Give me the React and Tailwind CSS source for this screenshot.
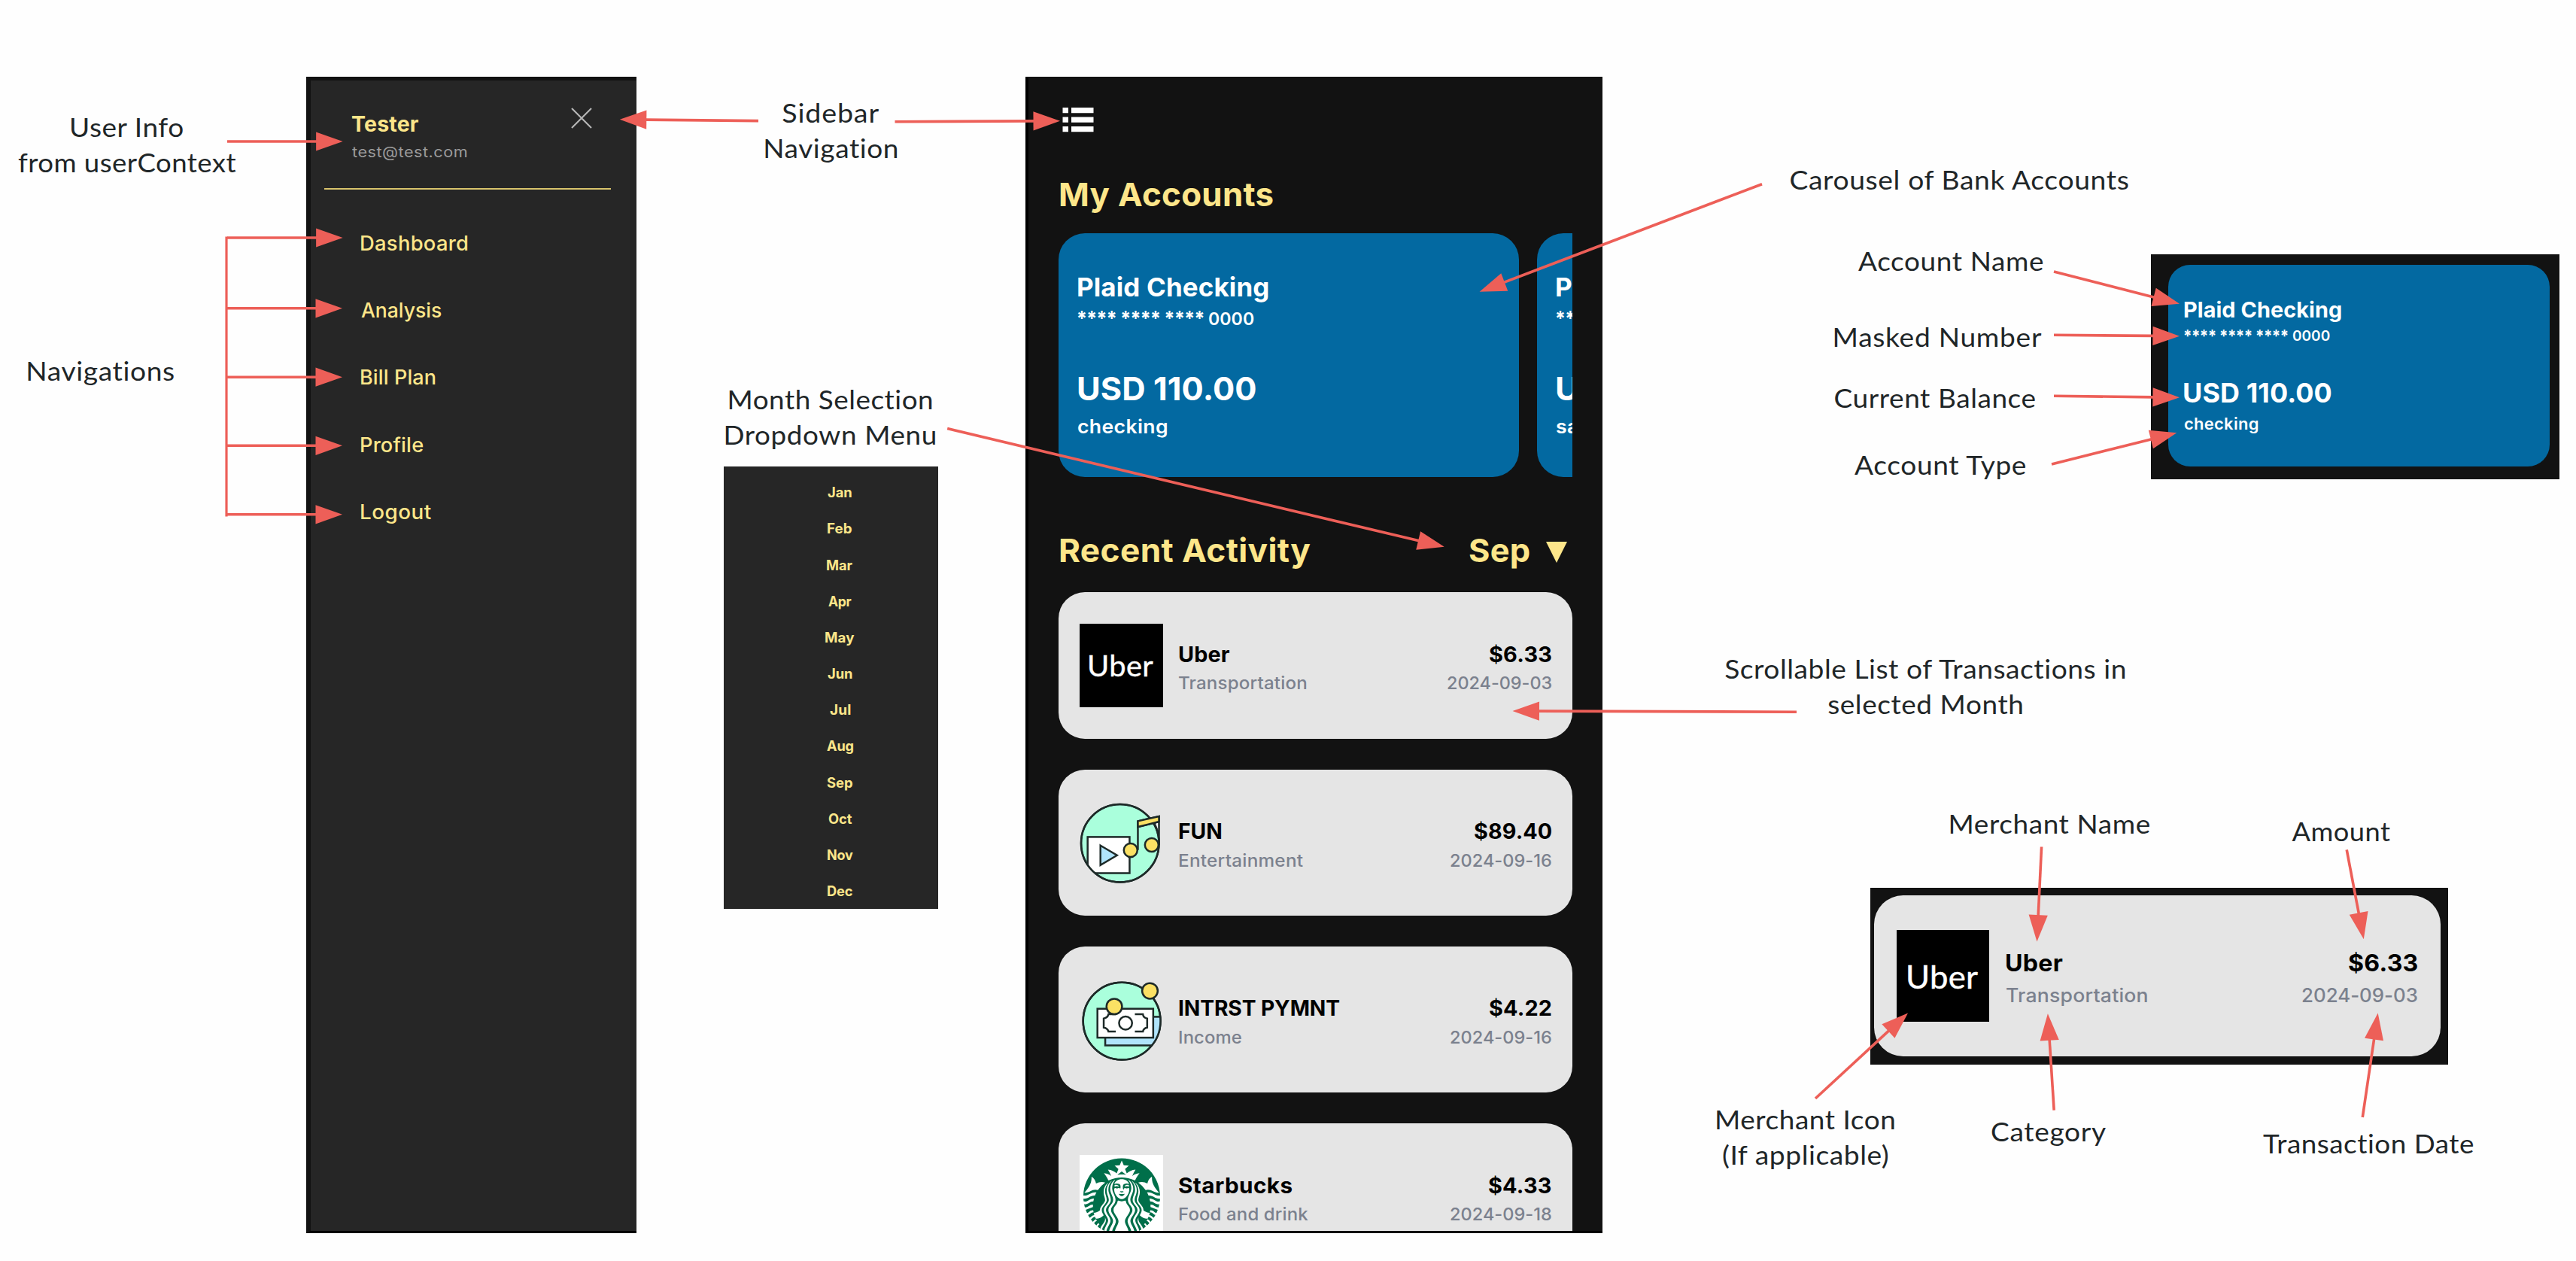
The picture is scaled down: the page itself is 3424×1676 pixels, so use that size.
import { useLayoutEffect, useRef } from "react";
import { SiStarbucks } from "react-icons/si";

/*
 * Text whose visible glyphs span exactly `w` pixels: the difference from the
 * natural width is shared between tracking and a slight horizontal stretch.
 */
function Fit({ w, className = "", children }) {
  const ref = useRef(null);
  useLayoutEffect(() => {
    const el = ref.current;
    const cs = getComputedStyle(el);
    const ctx = document.createElement("canvas").getContext("2d");
    ctx.font = `${cs.fontWeight} ${cs.fontSize} ${cs.fontFamily}`;
    const m = ctx.measureText(children);
    const left = m.actualBoundingBoxLeft;
    const ink = left + m.actualBoundingBoxRight;
    const s = Math.pow(w / ink, 0.65);
    const track = (w / s - ink) / (children.length - 1);
    const box = m.width + track * children.length;
    el.style.letterSpacing = `${track}px`;
    el.style.transform = `scaleX(${s})`;
    el.style.marginLeft = `${left * s}px`;
    el.style.marginRight = `${w - left * s - box}px`;
  }, [w, children]);
  return (
    <span ref={ref} className={`inline-block origin-left whitespace-nowrap ${className}`}>
      {children}
    </span>
  );
}

const LABELS = [
  { x: 169, y: 145, lines: [["User Info", 150], ["from userContext", 290]] },
  { x: 134, y: 468.5, lines: [["Navigations", 194]] },
  { x: 1104.8, y: 126, lines: [["Sidebar", 128], ["Navigation", 176]] },
  { x: 1104, y: 507, lines: [["Month Selection", 270], ["Dropdown Menu", 279]] },
  { x: 2603.6, y: 215, lines: [["Carousel of Bank Accounts", 451]] },
  { x: 2592.7, y: 323, lines: [["Account Name", 246]] },
  { x: 2576, y: 424, lines: [["Masked Number", 275]] },
  { x: 2572, y: 505, lines: [["Current Balance", 267]] },
  { x: 2578.6, y: 594, lines: [["Account Type", 229]] },
  { x: 2559, y: 865, lines: [["Scrollable List of Transactions in", 534], ["selected Month", 258]] },
  { x: 2725.3, y: 1071, lines: [["Merchant Name", 265]] },
  { x: 3112, y: 1080.5, lines: [["Amount", 131]] },
  { x: 2400, y: 1463.5, lines: [["Merchant Icon", 236], ["(If applicable)", 220]] },
  { x: 2723, y: 1480, lines: [["Category", 152]] },
  { x: 3148.2, y: 1496, lines: [["Transaction Date", 280.5]] },
];

function Label({ x, y, lines }) {
  return (
    <div
      className="absolute flex -translate-x-1/2 flex-col items-center font-['Lato',sans-serif] text-[35px] leading-[47px] text-[#1f2628]"
      style={{ left: x, top: y }}
    >
      {lines.map(([t, w]) => (
        <div key={t} className="h-[47px]">
          <Fit w={w}>{t}</Fit>
        </div>
      ))}
    </div>
  );
}

/* [x1, y1, tipX, tipY] */
const ARROWS = [
  [302, 188, 455.6, 188],
  [302, 316, 455.6, 316],
  [302, 409.8, 455, 409.8],
  [302, 501.2, 455, 501.2],
  [302, 592.3, 455, 592.3],
  [302, 683.8, 455, 683.8],
  [1008, 160.6, 823.8, 158.8],
  [1189.5, 161.8, 1409, 160.7],
  [1259.2, 569.6, 1919.7, 726.8],
  [2342, 244.7, 1966.6, 387.7],
  [2388, 946.2, 2010.5, 945],
  [2730, 361, 2897, 403.7],
  [2730, 445.3, 2897, 446.7],
  [2730, 526.3, 2897, 528.3],
  [2727, 617, 2893.3, 575.3],
  [2713.6, 1125.5, 2707.5, 1251.5],
  [3119.2, 1129.3, 3141.8, 1248.2],
  [2413, 1460, 2536, 1346.4],
  [2730.2, 1475.7, 2721.9, 1347.3],
  [3140.3, 1485, 3160.7, 1346.4],
];

function Arrows() {
  return (
    <svg className="pointer-events-none absolute inset-0" width="3424" height="1676" fill="#ed5f58" stroke="none">
      <line x1="301" y1="314.5" x2="301" y2="686.5" stroke="#ed5f58" strokeWidth="3.2" />
      {ARROWS.map(([x1, y1, x2, y2], i) => {
        const len = Math.hypot(x2 - x1, y2 - y1);
        const ux = (x2 - x1) / len;
        const uy = (y2 - y1) / len;
        const bx = x2 - ux * 35.5;
        const by = y2 - uy * 35.5;
        return (
          <g key={i}>
            <line x1={x1} y1={y1} x2={bx + ux} y2={by + uy} stroke="#ed5f58" strokeWidth="3.6" />
            <polygon
              points={`${x2},${y2} ${bx - uy * 12.6},${by + ux * 12.6} ${bx + uy * 12.6},${by - ux * 12.6}`}
            />
          </g>
        );
      })}
    </svg>
  );
}

const NAV = [["Dashboard", 141.5], ["Analysis", 107], ["Bill Plan", 99], ["Profile", 82.5], ["Logout", 93]];

function Sidebar() {
  return (
    <aside className="absolute left-[407px] top-[102px] h-[1537px] w-[439px] border-b-[3px] border-l-[6px] border-t-[5px] border-b-black border-l-[#121212] border-t-[#121212] bg-[#262626] pl-[18px] pr-[34px]">
      <header className="flex h-[144.5px] justify-between border-b-2 border-[#d9c36c] pl-[37px] pr-[25px]">
        <div className="flex flex-col items-start pt-[42px]">
          <div className="h-8 text-[28px] font-bold leading-8 text-[#fde68a]">
            <Fit w={88}>Tester</Fit>
          </div>
          <div className="mt-[9px] h-6 text-[20px] leading-6 text-[#9b9b9b]">
            <Fit w={152}>test@test.com</Fit>
          </div>
        </div>
        <svg className="mt-[36px]" width="28" height="28" viewBox="0 0 28 28" stroke="#b4b4b4" strokeWidth="2.2" fill="none">
          <path d="M1 1 27 27M27 1 1 27" />
        </svg>
      </header>
      <nav className="flex flex-col items-start pl-[49px] pt-[26.5px]">
        {NAV.map(([t, w]) => (
          <div key={t} className="flex h-[89.3px] items-center text-[26.5px] font-medium leading-[30px] text-[#fde68a]">
            <Fit w={w}>{t}</Fit>
          </div>
        ))}
      </nav>
    </aside>
  );
}

const MONTHS = [
  ["Jan", 32.3], ["Feb", 32], ["Mar", 34.3], ["Apr", 31], ["May", 38.3], ["Jun", 33],
  ["Jul", 27.3], ["Aug", 35.3], ["Sep", 34], ["Oct", 31.6], ["Nov", 33.6], ["Dec", 33.6],
];

function MonthMenu() {
  return (
    <ul className="absolute left-[962px] top-[620px] h-[588px] w-[285px] bg-[#262626] pl-6 pt-[10.2px]">
      {MONTHS.map(([m, w]) => (
        <li key={m} className="flex h-[48.17px] items-center justify-center text-[18.5px] font-bold leading-6 text-[#fde68a]">
          <Fit w={w}>{m}</Fit>
        </li>
      ))}
    </ul>
  );
}

function AccountCard({ type = "checking", typeWidth = 118.5, k = 1 }) {
  return (
    <article className="flex h-[32.4em] w-[61.18em] shrink-0 flex-col items-start rounded-[3.5em] bg-[#0369a1] pl-[2.55em] pt-[5.2em] font-bold text-white">
      <div className="h-[4em]">
        <Fit w={252.5 * k} className="text-[3.45em] font-bold leading-[1.159]">Plaid Checking</Fit>
      </div>
      <div className="mt-[0.8em] flex h-[2.8em] gap-[0.75em]">
        <Fit w={166.5 * k} className="text-[2.7em] leading-[1.037]">**** **** ****</Fit>
        <Fit w={60 * k} className="text-[2.3em] font-semibold leading-[1.217]">0000</Fit>
      </div>
      <div className="mt-[5.4em] h-[4.8em]">
        <Fit w={236.5 * k} className="text-[4.3em] font-bold leading-[1.116]">USD 110.00</Fit>
      </div>
      <div className="mt-[1.2em] h-[3em]">
        <Fit w={typeWidth * k} className="text-[2.55em] font-semibold leading-[1.176]">{type}</Fit>
      </div>
    </article>
  );
}

function UberLogo({ k = 1 }) {
  return (
    <div className="flex size-full items-center justify-center bg-black font-['Lato',sans-serif] text-white">
      <Fit w={84.5 * k} className="text-[3.9em] leading-none [-webkit-text-stroke:0.01em_white]">Uber</Fit>
    </div>
  );
}

function FunLogo() {
  return (
    <svg className="size-full" viewBox="45 43 333 333" stroke="#1d2a28" strokeWidth="7.5" fill="none">
      <clipPath id="fun-disc"><circle cx="206" cy="213" r="155" /></clipPath>
      <circle cx="206" cy="213" r="155" fill="#aaffdc" />
      <g clipPath="url(#fun-disc)">
        <rect x="77" y="188" width="167" height="144" fill="#fff" />
      </g>
      <circle cx="206" cy="213" r="155" />
      <path d="M128 222 194 261 128 300Z" fill="#b0e4fb" />
      <path d="M346 134 361 172V128Z" fill="#fff" strokeWidth="3" />
      <path d="M277 240V125L361 106V220M277 148 361 127" />
      <path d="M277 125 361 106V127L277 148Z" fill="#fbe164" />
      <circle cx="248" cy="241" r="27" fill="#fbe164" />
      <circle cx="332" cy="220" r="27" fill="#fbe164" />
    </svg>
  );
}

function IncomeLogo() {
  return (
    <svg className="size-full" viewBox="45 29 333 333" stroke="#1d2a28" strokeWidth="7.5" fill="none">
      <clipPath id="income-disc"><circle cx="213" cy="200" r="154" /></clipPath>
      <circle cx="213" cy="200" r="154" fill="#aaffdc" />
      <g clipPath="url(#income-disc)">
        <rect x="147" y="183" width="240" height="114" fill="#b0e4fb" />
      </g>
      <circle cx="213" cy="200" r="154" />
      <rect x="116" y="151" width="222" height="115" fill="#fff" />
      <circle cx="228" cy="208" r="26" />
      <path d="M189 173H160Q157 187 141 190V226Q157 229 160 242H189M265 173H297Q299 187 314 190V226Q299 229 297 242H265" />
      <circle cx="183" cy="142" r="31" fill="#fbe164" />
      <circle cx="325" cy="80" r="31" fill="#fbe164" />
    </svg>
  );
}

function StarbucksLogo() {
  return (
    <div className="flex size-full justify-center bg-white pt-[0.4em]">
      <SiStarbucks className="size-[10.2em] text-[#006f4a]" />
    </div>
  );
}

function TransactionCard({ logo, name, category, amount, date, k = 1 }) {
  return (
    <article className="flex h-[19.43em] w-[68.27em] shrink-0 items-center rounded-[3.5em] bg-[#e5e5e5] pl-[2.76em] pr-[2.8em]">
      <div className="size-[11.12em] shrink-0">{logo}</div>
      <div className="ml-[2.1em] flex flex-1 justify-between pt-[0.6em]">
        <div className="flex flex-col items-start">
          <div className="h-[3.4em]">
            <Fit w={name[1] * k} className="text-[2.85em] font-bold leading-[1.193] text-black">{name[0]}</Fit>
          </div>
          <div className="mt-[0.76em] h-[2.8em]">
            <Fit w={category[1] * k} className="text-[2.35em] font-medium leading-[1.191] text-[#7b818e]">{category[0]}</Fit>
          </div>
        </div>
        <div className="flex flex-col items-end">
          <div className="h-[3.4em]">
            <Fit w={amount[1] * k} className="text-[2.85em] font-bold leading-[1.193] text-black">{amount[0]}</Fit>
          </div>
          <div className="mt-[0.76em] h-[2.8em]">
            <Fit w={date[1] * k} className="text-[2.35em] font-medium leading-[1.191] text-[#7b818e]">{date[0]}</Fit>
          </div>
        </div>
      </div>
    </article>
  );
}

const TRANSACTIONS = [
  { logo: <UberLogo />, name: ["Uber", 68], category: ["Transportation", 169.5], amount: ["$6.33", 82.5], date: ["2024-09-03", 138.5] },
  { logo: <FunLogo />, name: ["FUN", 56], category: ["Entertainment", 165], amount: ["$89.40", 102], date: ["2024-09-16", 134] },
  { logo: <IncomeLogo />, name: ["INTRST PYMNT", 213], category: ["Income", 83], amount: ["$4.22", 82], date: ["2024-09-16", 134] },
  { logo: <StarbucksLogo />, name: ["Starbucks", 150], category: ["Food and drink", 171.5], amount: ["$4.33", 83], date: ["2024-09-18", 134] },
];

function Phone() {
  return (
    <main className="absolute left-[1363px] top-[102px] h-[1537px] w-[766.5px] overflow-hidden border-b-[3px] border-l-4 border-black bg-[#121212] pl-[40.4px] pr-[39.5px] pt-[41px] text-[10px]">
      <svg className="ml-[5px]" width="42" height="33" viewBox="0 0 42 33" fill="#fff">
        <path d="M.5 0h7.5v7.3H.5zM12 0h29.5v7.3H12zM.5 12.5h7.5v7.3H.5zM12 12.5h29.5v7.3H12zM.5 25h7.5v7.3H.5zM12 25h29.5v7.3H12z" />
      </svg>
      <h1 className="mt-[58px] h-12 pl-[2px] text-[43px] font-bold leading-[48px] text-[#fde68a]">
        <Fit w={283}>My Accounts</Fit>
      </h1>
      <section className="mt-[28.4px] flex gap-[24px] overflow-hidden">
        <AccountCard />
        <AccountCard type="savings" typeWidth={100} />
      </section>
      <div className="mt-[72.8px] flex h-12 justify-between pl-[2px] pr-[7px] text-[43px] font-bold leading-[48px] text-[#fde68a]">
        <h2><Fit w={333}>Recent Activity</Fit></h2>
        <div className="flex gap-[21.5px]">
          <Fit w={80}>Sep</Fit>
          <svg className="mt-[12.5px]" width="28" height="28" viewBox="0 0 28 28" fill="#fde68a">
            <path d="M0 0H28L14 28Z" />
          </svg>
        </div>
      </div>
      <section className="mt-[32.2px] flex flex-col gap-[41px]">
        {TRANSACTIONS.map((t) => (
          <TransactionCard key={t.name[0]} {...t} />
        ))}
      </section>
    </main>
  );
}

export default function App() {
  return (
    <div className="relative h-[1676px] w-[3424px] overflow-hidden bg-[#fefefe] font-['Inter',sans-serif]">
      <Sidebar />
      <MonthMenu />
      <Phone />
      <div className="absolute left-[2858.5px] top-[338px] h-[298.5px] w-[543px] bg-[#121212] pl-[23.5px] pt-[14px] text-[8.28px]">
        <AccountCard k={0.828} />
      </div>
      <div className="absolute left-[2486px] top-[1180px] h-[235px] w-[767.5px] bg-[#121212] pl-[5px] pt-[10px] text-[11.03px]">
        <TransactionCard {...TRANSACTIONS[0]} logo={<UberLogo k={1.103} />} k={1.103} />
      </div>
      {LABELS.map((l) => (
        <Label key={l.lines[0][0]} {...l} />
      ))}
      <Arrows />
    </div>
  );
}
